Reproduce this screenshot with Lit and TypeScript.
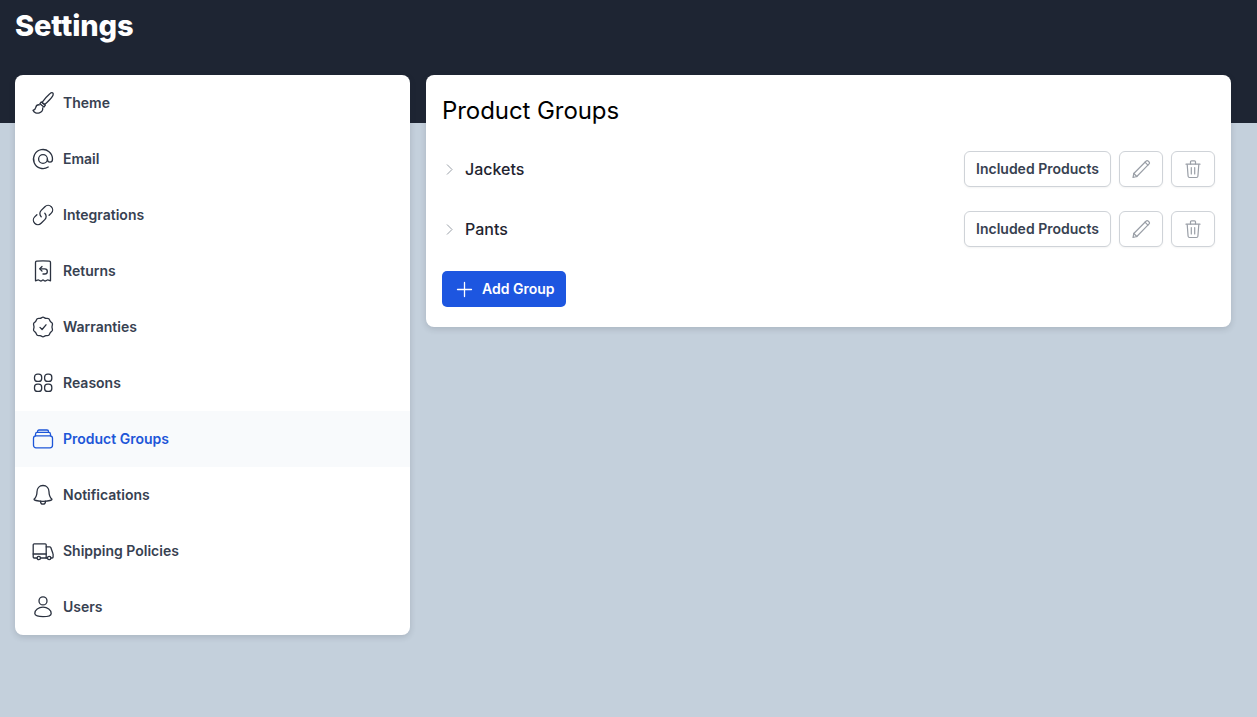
import { LitElement, html, css, svg } from "lit";
import { customElement } from "lit/decorators.js";

const icons: Record<string, unknown> = {
  Theme: svg`<path d="M21.600 1.800c-1-.4-2 .2-2.800.9-2.400 2-5.300 5.400-7.700 8.700l2.600 2.100c3-2.600 6.200-5.800 7.700-8.100.7-1.100 1.300-3.100.2-3.600Z"/><path d="M10.300 11l4.100 3.200-1.500 1.800-4-3.300Z"/><path d="M8.400 13.800c-2-.2-3.300 1-3.600 2.600-.2 1.300-.9 2.300-2.800 2.900.9 2.600 4 3.400 6.400 2.500 2.500-.9 3.500-3.300 3.300-5"/>`,
  Email: svg`<circle cx="12" cy="12" r="4.400"/><path d="M16.400 12c0 1.900 1 3.200 2.500 3.200 1.700 0 2.600-1.500 2.600-3.200A9.500 9.500 0 1 0 17.200 20"/>`,
  Integrations: svg`<path d="M13.800 10.200a4.500 4.500 0 0 1 0 6.400l-3.700 3.700a4.500 4.500 0 0 1-6.400-6.400l2.200-2.200"/><path d="M10.200 13.800a4.500 4.500 0 0 1 0-6.400l3.700-3.700a4.500 4.500 0 0 1 6.400 6.400l-2.200 2.200"/>`,
  Returns: svg`<path d="M4.500 3.400c0-.7.500-1.200 1.200-1.300 4.200-.4 8.400-.4 12.600 0 .7.100 1.200.6 1.200 1.300v18.400c-.9-.1-1.800-.9-2.700-.9s-1.800 1.100-2.700 1.100-1.400-1.100-2.100-1.100-1.200 1.100-2.100 1.100-1.800-1.100-2.700-1.100-1.800.8-2.700.9Z"/><path d="M9 9.800h4.700a2.600 2.600 0 0 1 0 5.200H12"/><path d="M11 7.500 8.800 9.800l2.200 2.300"/>`,
  Warranties: svg`<path d="M12 2.200c1 0 1.900 1 2.800 1.200 1 .2 2.200-.2 3 .4.800.6.900 1.800 1.500 2.600.6.800 1.800 1.200 2.100 2.200.3 1-.4 2-.4 3.400s.7 2.400.4 3.400c-.3 1-1.500 1.400-2.100 2.200-.6.800-.7 2-1.500 2.600-.8.600-2 .2-3 .4-.9.200-1.800 1.200-2.800 1.200s-1.900-1-2.800-1.200c-1-.2-2.200.2-3-.4-.8-.6-.9-1.800-1.500-2.600-.6-.8-1.800-1.200-2.100-2.200-.3-1 .4-2 .4-3.400s-.7-2.400-.4-3.400c.3-1 1.500-1.400 2.100-2.200.6-.8.7-2 1.500-2.600.8-.6 2-.2 3-.4.9-.2 1.800-1.200 2.800-1.200Z"/><path d="M9 12.400l2.100 2.100 3.900-4.700"/>`,
  Reasons: svg`<rect x="3.500" y="3.200" width="7.200" height="7.200" rx="3"/><rect x="13.600" y="3.200" width="7.200" height="7.200" rx="3"/><rect x="3.500" y="13.200" width="7.200" height="7.200" rx="3"/><rect x="13.600" y="13.200" width="7.200" height="7.200" rx="3"/>`,
  "Product Groups": svg`<rect x="2.500" y="8.800" width="19" height="12" rx="2.500"/><path d="M4.500 8.800V7.200c0-1 .8-1.800 1.800-1.800h11.400c1 0 1.800.8 1.800 1.800v1.600"/><path d="M6.500 5.400V4.500c0-.8.700-1.500 1.500-1.500h8c.8 0 1.500.7 1.500 1.500v.9"/>`,
  Notifications: svg`<path d="M12 2.500c-3.700 0-6 2.800-6 6.300 0 3.200-.9 5.600-3 7.500 0 1.200 5.500 2 9 2s9-.8 9-2c-2.100-1.900-3-4.300-3-7.500 0-3.500-2.300-6.300-6-6.300Z"/><path d="M9.500 18.200c0 1.800 1.100 3 2.500 3s2.500-1.200 2.500-3"/>`,
  "Shipping Policies": svg`<path d="M6 19H3.200c-.6 0-1-.5-1-1V5.800c0-.6.400-1 1-1h11c.6 0 1 .4 1 1V19H9.500"/><path d="M2.200 15h13"/><path d="M15.200 7.800h3.500c.5 0 .9.300 1.100.7l2.200 6.300c.1.200.1.400.1.600v2.600c0 .6-.4 1-1 1h-1.300"/><path d="M15.200 19h1"/><circle cx="7.800" cy="19" r="1.700"/><circle cx="18.200" cy="19" r="1.700"/>`,
  Users: svg`<circle cx="12" cy="5.900" r="4"/><path d="M3.800 18.500c0-3.500 3.700-6.300 8.200-6.300s8.200 2.800 8.200 6.300c0 2.300-3.700 3.200-8.200 3.200s-8.200-.9-8.200-3.200Z"/>`,
};

const navItems = ["Theme", "Email", "Integrations", "Returns", "Warranties", "Reasons", "Product Groups", "Notifications", "Shipping Policies", "Users"];
const groups = ["Jackets", "Pants"];

@customElement("app-root")
export class AppRoot extends LitElement {
  static styles = css`
    :host {
      display: block;
      min-height: 717px;
      background: #c4d0dc;
      font-family: Inter, "Liberation Sans", sans-serif;
      -webkit-font-smoothing: antialiased;
    }
    .banner {
      height: 123px;
      box-sizing: border-box;
      background: #1e2533;
      padding: 8px 15px 0;
    }
    h1 {
      margin: 0;
      font-size: 29px;
      line-height: 36px;
      font-weight: 800;
      letter-spacing: -0.1px;
      color: #fff;
    }
    .layout {
      display: flex;
      gap: 16px;
      align-items: flex-start;
      margin: -48px 26px 0 15px;
    }
    .side {
      width: 395px;
      flex: none;
      background: #fff;
      border-radius: 8px;
      box-shadow: 0 2px 6px rgba(30, 37, 51, 0.16);
      overflow: hidden;
    }
    .nav-item {
      height: 56px;
      display: flex;
      align-items: center;
      gap: 8px;
      padding: 0 16px;
      font-size: 14px;
      font-weight: 600;
      color: #374151;
    }
    .nav-item span,
    .btn span,
    .add span {
      padding-bottom: 2px;
    }
    .nav-item.active {
      background: #f8fafc;
      color: #1d56d8;
    }
    .nav-item svg {
      width: 24px;
      height: 24px;
      flex: none;
      fill: none;
      stroke: #2b3240;
      stroke-width: 1.300;
      stroke-linecap: round;
      stroke-linejoin: round;
    }
    .nav-item.active svg {
      stroke: #1d56d8;
    }
    .main {
      flex: 1;
      background: #fff;
      border-radius: 8px;
      box-shadow: 0 2px 6px rgba(30, 37, 51, 0.16);
      padding: 18px 16px 20px;
    }
    h2 {
      margin: 0 0 10px;
      font-size: 24px;
      line-height: 36px;
      font-weight: 400;
      letter-spacing: -0.07px;
      color: #000;
    }
    .row {
      height: 60px;
      display: flex;
      align-items: center;
      gap: 8px;
    }
    .chev {
      width: 15px;
      height: 15px;
      flex: none;
      fill: none;
      stroke: #9aa0a8;
      stroke-width: 1;
    }
    .name {
      flex: 1;
      font-size: 16px;
      font-weight: 500;
      color: #1f2430;
    }
    .btn {
      height: 36px;
      box-sizing: border-box;
      display: flex;
      align-items: center;
      justify-content: center;
      background: #fff;
      border: 1px solid #cfd3d8;
      border-radius: 6px;
      box-shadow: 0 1px 2px rgba(0, 0, 0, 0.05);
      font-size: 14px;
      font-weight: 600;
      color: #374151;
    }
    .text-btn {
      width: 147px;
    }
    .icon-btn {
      width: 44px;
    }
    .icon-btn svg {
      width: 20px;
      height: 20px;
      fill: none;
      stroke: #9a9fa7;
      stroke-width: 1.200;
      stroke-linecap: round;
      stroke-linejoin: round;
    }
    .add {
      margin-top: 12px;
      width: 124px;
      height: 36px;
      box-sizing: border-box;
      display: flex;
      align-items: center;
      gap: 9px;
      padding-left: 14px;
      background: #1d56e0;
      border-radius: 5px;
      font-size: 14px;
      font-weight: 600;
      color: #fff;
    }
    .add svg {
      width: 17px;
      height: 17px;
      flex: none;
      fill: none;
      stroke: #fff;
      stroke-width: 1.300;
      stroke-linecap: round;
    }
  `;

  render() {
    return html`
      <div class="banner"><h1>Settings</h1></div>
      <div class="layout">
        <nav class="side">
          ${navItems.map(
            (n) => html`<div class="nav-item ${n === "Product Groups" ? "active" : ""}">
              <svg viewBox="0 0 24 24">${icons[n]}</svg><span>${n}</span>
            </div>`
          )}
        </nav>
        <section class="main">
          <h2>Product Groups</h2>
          ${groups.map(
            (g) => html`<div class="row">
              <svg class="chev" viewBox="0 0 15 15"><path d="M5 2.500 10 7.500 5 12.500"/></svg>
              <span class="name">${g}</span>
              <div class="btn text-btn"><span>Included Products</span></div>
              <div class="btn icon-btn">
                <svg viewBox="0 0 20 20"><path d="M2 18.500l.8-4L15.200 2a1.300 1.300 0 0 1 1.900 0l1 1a1.300 1.300 0 0 1 0 1.900L5.800 17.500Z"/><path d="M14 3.200l2.900 2.900"/><path d="M2.800 14.500l3 3"/></svg>
              </div>
              <div class="btn icon-btn">
                <svg viewBox="0 0 20 20"><path d="M4.200 5.500l.9 11.700c.1.800.7 1.300 1.400 1.300h7c.7 0 1.300-.5 1.400-1.300l.9-11.700"/><path d="M3 5.200h14"/><path d="M7.500 5V2.800c0-.6.500-1 1-1h3c.5 0 1 .4 1 1V5"/><path d="M8.300 8.500v6.500M11.700 8.500v6.500"/></svg>
              </div>
            </div>`
          )}
          <div class="add">
            <svg viewBox="0 0 17 17"><path d="M8.500 1.500v14M1.500 8.500h14"/></svg>
            <span>Add Group</span>
          </div>
        </section>
      </div>
    `;
  }
}
